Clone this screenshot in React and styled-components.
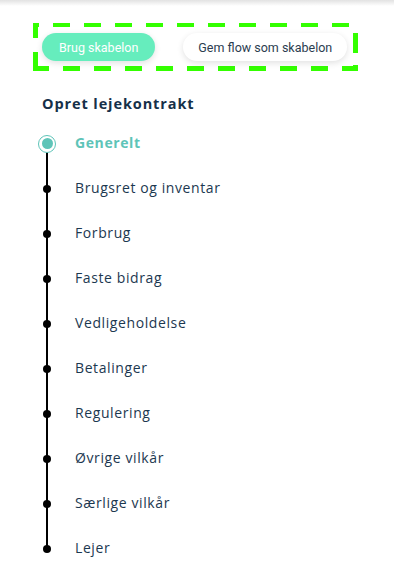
import React from "react";
import styled, { createGlobalStyle } from "styled-components";

const GlobalStyle = createGlobalStyle`
  html, body {
    margin: 0;
    padding: 0;
    background: #ffffff;
  }
  body {
    font-family: "Open Sans", "Liberation Sans", sans-serif;
  }
`;

const steps = [
  "Generelt",
  "Brugsret og inventar",
  "Forbrug",
  "Faste bidrag",
  "Vedligeholdelse",
  "Betalinger",
  "Regulering",
  "Øvrige vilkår",
  "Særlige vilkår",
  "Lejer",
];

const dash = "#33ff00";

export default function App() {
  return (
    <Page>
      <GlobalStyle />
      <TopShade />
      <Content>
        <Toolbar>
          <TemplateButton $primary>Brug skabelon</TemplateButton>
          <TemplateButton>Gem flow som skabelon</TemplateButton>
        </Toolbar>
        <Heading>Opret lejekontrakt</Heading>
        <Steps>
          {steps.map((label, i) => (
            <Step key={label}>
              <MarkerCell>
                {i === 0 ? <ActiveMarker /> : <Dot />}
              </MarkerCell>
              <StepLabel $active={i === 0}>{label}</StepLabel>
            </Step>
          ))}
        </Steps>
      </Content>
    </Page>
  );
}

const Page = styled.div`
  width: 394px;
  min-height: 582px;
  background: #fff;
`;

const TopShade = styled.div`
  height: 6px;
  background: linear-gradient(#e2e2e2, rgba(255, 255, 255, 0));
`;

const Content = styled.div`
  padding: 17px 0 0 33px;
`;

/* dashed outline drawn with gradients so the dash length matches */
const Toolbar = styled.div`
  display: flex;
  align-items: center;
  gap: 28px;
  width: 325px;
  height: 48px;
  box-sizing: border-box;
  padding: 0 0 0 9px;
  background:
    linear-gradient(to right, ${dash} 17px, transparent 17px) 20px 0 / 31px 4px repeat-x,
    linear-gradient(to right, ${dash} 17px, transparent 17px) 30px 100% / 31px 5px repeat-x,
    linear-gradient(to bottom, ${dash} 15px, transparent 15px) 0 0 / 5px 29px repeat-y,
    linear-gradient(to bottom, ${dash} 20px, transparent 20px) 100% 10px / 5px 32px repeat-y;
`;

const TemplateButton = styled.button`
  height: 28px;
  padding: 0 ${(p) => (p.$primary ? "17px" : "15px")};
  border: none;
  border-radius: 14px;
  font-family: Roboto, "Liberation Sans", sans-serif;
  font-size: 12.5px;
  color: ${(p) => (p.$primary ? "#ffffff" : "#2b3d50")};
  background: ${(p) => (p.$primary ? "#66edbd" : "#ffffff")};
  box-shadow: 0 2px 6px rgba(0, 0, 0, 0.12);
  white-space: nowrap;
`;

const Heading = styled.h2`
  margin: 24px 0 0 9px;
  font-size: 14.5px;
  font-weight: 700;
  line-height: 18px;
  letter-spacing: 0.9px;
  color: #163049;
`;

const Steps = styled.ul`
  position: relative;
  list-style: none;
  margin: 8px 0 0 5px;
  padding: 0;

  &::before {
    content: "";
    position: absolute;
    left: 8px;
    top: 30px;
    bottom: 22px;
    width: 2px;
    background: #000;
  }
`;

const Step = styled.li`
  display: flex;
  align-items: center;
  height: 45px;
  gap: 19px;
`;

const MarkerCell = styled.div`
  position: relative;
  z-index: 1;
  width: 18px;
  display: flex;
  justify-content: center;
  align-items: center;
`;

const ActiveMarker = styled.span`
  width: 18px;
  height: 18px;
  box-sizing: border-box;
  border-radius: 50%;
  border: 1.5px solid #5ec4b8;
  background: #fff;
  display: flex;
  align-items: center;
  justify-content: center;

  &::after {
    content: "";
    width: 11px;
    height: 11px;
    border-radius: 50%;
    background: #5ec4b8;
  }
`;

const Dot = styled.span`
  width: 8px;
  height: 8px;
  border-radius: 50%;
  background: #000;
`;

const StepLabel = styled.span`
  font-size: 14px;
  line-height: 18px;
  font-weight: ${(p) => (p.$active ? 700 : 500)};
  color: ${(p) => (p.$active ? "#5ec4b8" : "#1c3850")};
  letter-spacing: 0.6px;
  transform: translateY(-1px);
`;
